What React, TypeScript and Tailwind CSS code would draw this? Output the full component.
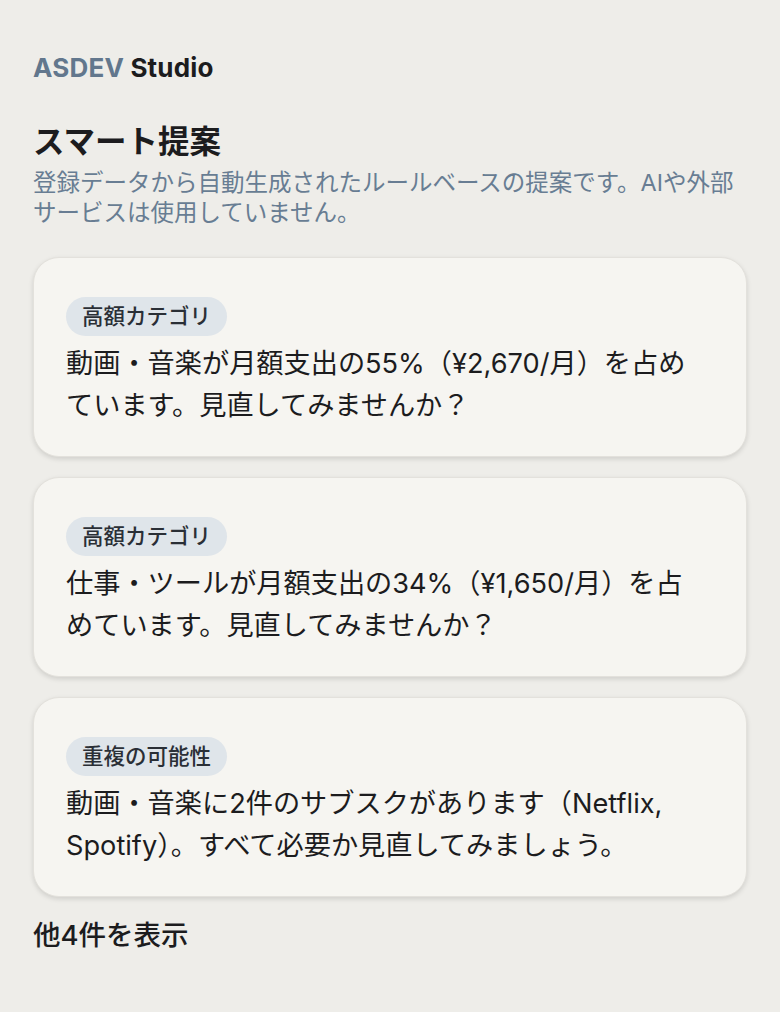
import React from "react";

const cards = [
  {
    badge: "高額カテゴリ",
    text: "動画・音楽が月額支出の55%（¥2,670/月）を占めています。見直してみませんか？",
  },
  {
    badge: "高額カテゴリ",
    text: "仕事・ツールが月額支出の34%（¥1,650/月）を占めています。見直してみませんか？",
  },
  {
    badge: "重複の可能性",
    text: "動画・音楽に2件のサブスクがあります（Netflix, Spotify）。すべて必要か見直してみましょう。",
  },
];

export default function App() {
  return (
    <div
      className="min-h-[1012px] w-full bg-[#eeede9] px-[33px] pt-[53px] pb-10 text-[#1c1c1e]"
      style={{ fontFamily: '"Inter", "Noto Sans CJK JP", "Noto Sans", sans-serif' }}
    >
      <div className="text-[26px] font-bold leading-[30px] tracking-[0.2px]">
        <span className="text-[#62778d]">ASDEV</span> <span className="text-[#1c1c1e]">Studio</span>
      </div>

      <h1 className="mt-[41px] text-[31.5px] font-bold leading-[36px]">スマート提案</h1>
      <p className="mt-[8px] text-[23.5px] leading-[30px] text-[#687d93]">
        登録データから自動生成されたルールベースの提案です。AIや外部サービスは使用していません。
      </p>

      <div className="mt-[29px] flex flex-col gap-[20px]">
        {cards.map((c, i) => (
          <div
            key={i}
            className="h-[200px] rounded-[26px] border border-[#e3e1dc] bg-[#f6f5f1] px-[32px] pt-[39px] shadow-[0_2px_5px_rgba(0,0,0,0.13)]"
          >
            <div className="inline-flex h-[39px] items-center rounded-full bg-[#dfe5ea] px-[16px] text-[21.5px] font-medium text-[#2a2f36]">
              {c.badge}
            </div>
            <p className="mt-[7px] pr-[16px] text-[27.2px] leading-[42px] text-[#1c1c1e]">{c.text}</p>
          </div>
        ))}
      </div>

      <div className="mt-[20px] text-[27.5px] font-medium leading-[36px] text-[#1c1c1e]">他4件を表示</div>
    </div>
  );
}
